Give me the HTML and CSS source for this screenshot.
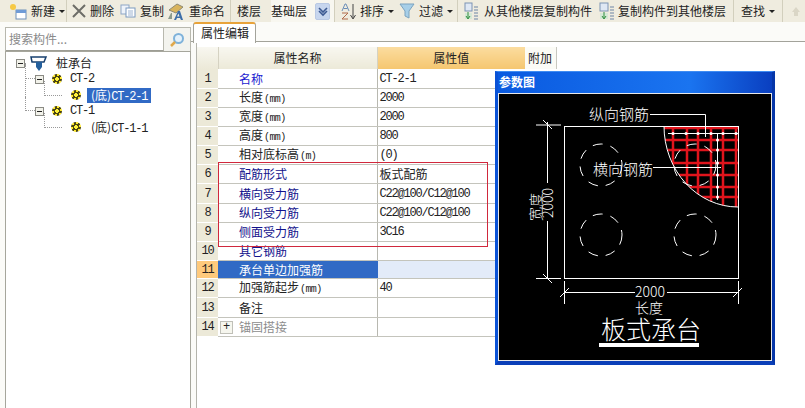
FILE: index.html
```html
<!DOCTYPE html>
<html lang="zh">
<head>
<meta charset="utf-8">
<title>属性编辑</title>
<link rel="stylesheet" href="styles.css">
</head>
<body>
<div class="app">
  <div class="toolbar">
    <div class="tb w1"><svg class="ic" width="19" height="18" viewBox="0 0 19 18"><circle cx="4" cy="5" r="3" fill="#f6c945"/><rect x="7" y="8" width="10" height="9" fill="#fff" stroke="#6f8fb8"/><rect x="7" y="8" width="10" height="3" fill="#6f9bd6"/></svg><span>新建</span><i class="caret"></i></div>
    <div class="tb sep w2"><svg class="ic" width="14" height="14" viewBox="0 0 14 14"><path d="M1 1l12 12M13 1L1 13" stroke="#6d6d68" stroke-width="2" fill="none"/></svg><span>删除</span></div>
    <div class="tb w3"><svg class="ic" width="16" height="14" viewBox="0 0 16 14"><rect x="1" y="1" width="8" height="9" fill="#eef3fa" stroke="#8ea6c6"/><rect x="6" y="4" width="9" height="9" fill="#fff" stroke="#7b99c0"/><path d="M8 7h5M8 9h5M8 11h5" stroke="#9db4d2"/></svg><span>复制</span></div>
    <div class="tb w4"><svg class="ic" width="21" height="19" viewBox="0 0 21 19"><path d="M3 8l8-6 6 3-7 6z" fill="#d9b45c" stroke="#8f8a72"/><path d="M2 17l3-6h1v6z" fill="#8c9a8c"/><path d="M8 18l4-9h2l3 9h-2l-1-2h-3l-1 2zM11 14.500h2.500l-1-3z" fill="#3d6ea8" fill-rule="evenodd"/></svg><span>重命名</span></div>
    <div class="tb sep w5"><span>楼层</span></div>
    <div class="floor"><span>基础层</span><b class="drop"><svg width="12" height="12" viewBox="0 0 12 12"><path d="M2 3l4 4 4-4M2 6l4 4 4-4" stroke="#3c5a92" stroke-width="1.6" fill="none"/></svg></b></div>
    <div class="tb sep w6"><svg class="ic" width="17" height="17" viewBox="0 0 17 17"><path d="M1 8l3-7h1l3 7M2.500 5.500h4" stroke="#6d8fb8" fill="none"/><path d="M1 10h6L1 16h6" stroke="#b06a4a" fill="none"/><path d="M12 1v14M9.500 12l2.500 4 2.500-4" stroke="#444" fill="none"/></svg><span>排序</span><i class="caret"></i></div>
    <div class="tb w7"><svg class="ic" width="16" height="16" viewBox="0 0 16 16"><path d="M1 1h14L10 8v7L6 13V8z" fill="#a7cfe8" stroke="#7ba3bf"/></svg><span>过滤</span><i class="caret"></i></div>
    <div class="tb sep w8"><svg class="ic" width="15" height="18" viewBox="0 0 15 18"><rect x="1" y="1" width="7" height="8" fill="#dfe8f4" stroke="#7d93b4"/><path d="M1 11h7v6H1z" fill="#d6e9d6"/><path d="M4 10v6M2 14l2 3 2-3" stroke="#2f8f3f" fill="none"/><path d="M10 5h4M10 8h4M10 11h4M10 14h4M10 17h4" stroke="#6d85a6"/></svg><span>从其他楼层复制构件</span></div>
    <div class="tb w9"><svg class="ic" width="16" height="18" viewBox="0 0 16 18"><rect x="1" y="1" width="8" height="8" fill="#dfe8f4" stroke="#7d93b4"/><path d="M1 11h8v6H1z" fill="#d6e9d6"/><path d="M5 10v6M3 14l2 3 2-3" stroke="#2f8f3f" fill="none"/><path d="M11 5h4M11 8h4M11 11h4M11 14h4M11 17h4" stroke="#6d85a6"/></svg><span>复制构件到其他楼层</span></div>
    <div class="tb sep w10"><span>查找</span><i class="caret"></i></div>
    <div class="tb sep w11"><svg width="10" height="11" viewBox="0 0 10 11"><path d="M5 1l4 5H7v4H3V6H1z" fill="#dad6c6"/></svg></div>
  </div>
  <div class="main">
    <aside class="side">
      <div class="search">
        <div class="search-input">搜索构件...</div>
        <div class="search-btn"><svg width="16" height="16" viewBox="0 0 16 16"><circle cx="9.500" cy="6.500" r="4.500" fill="#e4f1fb" stroke="#7fb2da" stroke-width="2"/><path d="M6 10l-4 4" stroke="#e0a94c" stroke-width="2.500"/></svg></div>
      </div>
      <div class="tree">
        <div class="node l1"><i class="exp"></i><svg class="pile" width="18" height="17" viewBox="0 0 18 17"><path d="M1 2h15l-2 5H2z" fill="#fff" stroke="#17406f" stroke-width="1.500"/><path d="M6 7h6v5l-3 4-3-4z" fill="#245f9c"/></svg><span class="label">桩承台</span></div>
        <div class="node l2 line-a"><i class="exp"></i><i class="gear"></i><span class="label lat">CT-2</span></div>
        <div class="node l3 line-b"><i class="gear"></i><span class="label sel">(底)<span class="lat">CT-2-1</span></span></div>
        <div class="node l2 line-c"><i class="exp"></i><i class="gear"></i><span class="label lat">CT-1</span></div>
        <div class="node l3 line-b"><i class="gear"></i><span class="label">(底)<span class="lat">CT-1-1</span></span></div>
      </div>
    </aside>
    <section class="content">
      <div class="tabs"><div class="tab">属性编辑</div></div>
      <div class="grid-wrap">
        <table class="grid">
          <colgroup><col class="c0"><col class="c1"><col class="c2"><col class="c3"></colgroup>
          <thead>
            <tr><th></th><th class="h">属性名称</th><th class="h hot">属性值</th><th class="extra">附加</th></tr>
          </thead>
          <tbody>
            <tr><td class="n">1</td><td class="k req1">名称</td><td class="v lat">CT-2-1</td></tr>
            <tr><td class="n">2</td><td class="k">长度<span class="u">(mm)</span></td><td class="v lat">2000</td></tr>
            <tr><td class="n">3</td><td class="k">宽度<span class="u">(mm)</span></td><td class="v lat">2000</td></tr>
            <tr><td class="n">4</td><td class="k">高度<span class="u">(mm)</span></td><td class="v lat">800</td></tr>
            <tr><td class="n">5</td><td class="k">相对底标高<span class="u">(m)</span></td><td class="v lat">(0)</td></tr>
            <tr><td class="n">6</td><td class="k req">配筋形式</td><td class="v">板式配筋</td></tr>
            <tr class="tall"><td class="n">7</td><td class="k req">横向受力筋</td><td class="v lat">C22@100/C12@100</td></tr>
            <tr><td class="n">8</td><td class="k req">纵向受力筋</td><td class="v lat">C22@100/C12@100</td></tr>
            <tr><td class="n">9</td><td class="k req">侧面受力筋</td><td class="v lat">3C16</td></tr>
            <tr><td class="n">10</td><td class="k req">其它钢筋</td><td class="v"></td></tr>
            <tr class="short selrow"><td class="n">11</td><td class="k">承台单边加强筋</td><td class="v"></td></tr>
            <tr><td class="n">12</td><td class="k">加强筋起步<span class="u">(mm)</span></td><td class="v lat">40</td></tr>
            <tr class="tall"><td class="n">13</td><td class="k">备注</td><td class="v"></td></tr>
            <tr><td class="n">14</td><td class="k muted"><div class="cell-row"><i class="plus">+</i><span>锚固搭接</span></div></td><td class="v"></td></tr>
          </tbody>
        </table>
      </div>
    </section>
  </div>
  <div class="redbox"></div>
  <div class="win">
    <div class="win-title">参数图</div>
    <svg class="draw" width="272" height="266" viewBox="499 94 272 266">
      <defs><clipPath id="arc"><path d="M664 126A74 81 0 0 0 738 207V126z"/></clipPath></defs>
      <g class="bars" clip-path="url(#arc)">
        <path d="M673 126V207M687 126V207M698 126V207M711 126V207M723 126V207M736 126V207M664 128H738M664 140H738M664 150H738M664 163H738M664 175H738M664 187H738M664 197H738"/>
      </g>
      <g class="ln">
        <rect x="564.500" y="126.500" width="174" height="152"/>
        <path d="M664 126A74 81 0 0 0 738 207"/>
        <path d="M536 125H561M547.500 122V183M547.500 221V278M536 278.500H561M543 120l9 9M543 274l9 9"/>
        <path d="M564.500 281V304M738.500 281V304M564 292.500H635M667 292.500H738M560 297l9-9M733 297l9-9"/>
        <path d="M650 114.500H705.500V137M653 167.500H721"/>
        <path d="M668 133.500H738M717.500 133V200"/>
      </g>
      <g class="dots">
        <circle cx="673" cy="133.500" r="1.500"/><circle cx="686" cy="133.500" r="1.500"/><circle cx="698" cy="133.500" r="1.500"/><circle cx="711" cy="133.500" r="1.500"/><circle cx="723" cy="133.500" r="1.500"/><circle cx="736" cy="133.500" r="1.500"/>
        <circle cx="717.500" cy="140" r="1.500"/><circle cx="717.500" cy="150" r="1.500"/><circle cx="717.500" cy="163" r="1.500"/><circle cx="717.500" cy="175" r="1.500"/><circle cx="717.500" cy="187" r="1.500"/><circle cx="717.500" cy="197" r="1.500"/>
      </g>
      <g class="dash">
        <circle cx="601" cy="165" r="21"/><circle cx="695" cy="165" r="21"/>
        <circle cx="601" cy="235" r="21"/><circle cx="695" cy="235" r="21"/>
      </g>
      <text class="t15" x="589" y="120">纵向钢筋</text>
      <text class="t15" x="593" y="175">横向钢筋</text>
      <text class="t14" transform="translate(553 218) rotate(-90)">2000</text>
      <text class="t14" transform="translate(541 221) rotate(-90)">宽度</text>
      <text class="t14" x="635" y="297">2000</text>
      <text class="t14" x="635" y="313">长度</text>
      <text class="t25" x="601" y="339">板式承台</text>
      <rect class="under" x="599" y="343" width="100" height="4"/>
    </svg>
  </div>
</div>
</body>
</html>
```
FILE: styles.css
```css
* { box-sizing: border-box; }
html, body { margin: 0; padding: 0; }
body { width: 805px; height: 408px; overflow: hidden; background: #fff; color: #222;
  font: 12px/1 "Noto Sans CJK SC", "Liberation Sans", sans-serif; }
.app { position: relative; width: 805px; height: 408px; display: flex; flex-direction: column; }
.lat, .u { font-family: "Liberation Mono", monospace; font-size: 12px; letter-spacing: -1.2px; }

/* toolbar */
.toolbar { height: 22px; flex: none; display: flex; align-items: center; background: #efecdf; white-space: nowrap; padding-left: 9px; }
.tb { display: flex; align-items: center; height: 22px; }
.tb.sep { border-left: 1px solid #d2cfbd; }
.ic { flex: none; margin-right: 3px; }
.caret { width: 0; height: 0; margin-left: 4px; border: 3px solid transparent; border-top: 3px solid #222; border-bottom: 0; }
.w1 { width: 57px; }
.w2 { width: 48px; padding-left: 5px; }
.w2 .ic { margin-right: 4px; }
.w3 { width: 51px; padding-left: 6px; }
.w3 .ic { margin-right: 4px; }
.w4 { width: 65px; padding-left: 1px; }
.w4 .ic { margin-right: 2px; }
.w5 { width: 41px; padding-left: 6px; }
.floor { width: 63px; height: 22px; display: flex; align-items: center; background: #f8f7f0; justify-content: space-between; }
.drop { width: 15px; height: 17px; margin-right: 4px; display: flex; align-items: center; justify-content: center; background: #c7d6ee; border: 1px solid #b9c9e4; border-radius: 2px; }
.w6 { width: 65px; padding-left: 6px; }
.w6 .ic { margin-right: 2px; }
.w7 { width: 58px; }
.w7 .ic { margin-right: 4px; }
.w8 { width: 142px; padding-left: 6px; }
.w8 .ic { margin-right: 5px; }
.w9 { width: 134px; }
.w10 { width: 49px; padding-left: 7px; }
.w11 { flex: 1; padding-left: 8px; }

/* main */
.main { flex: 1; display: flex; background: #fbfbf8; min-height: 0; }
.side { width: 191px; flex: none; padding: 5px 0 0 5px; display: flex; flex-direction: column; }
.search { height: 24px; display: flex; flex: none; background: #f3f3ee; border: 1px solid #b8b8ae; border-bottom: 0; }
.search-input { width: 158px; background: #fff; border-right: 1px solid #b8b8ae; color: #8a8a8a; padding: 5px 0 0 3px; border-bottom: 1px solid #9d9d94; }
.search-btn { flex: 1; display: flex; align-items: center; justify-content: center; }
.tree { flex: 1; background: #fff; border: 1px solid #a6a69c; border-bottom: 0; padding-top: 3px; }
.node { position: relative; height: 16px; display: flex; align-items: center; }
.l1 { padding-left: 10px; }
.l2 { padding-left: 29px; }
.l3 { padding-left: 65px; }
.exp { position: relative; flex: none; width: 9px; height: 9px; background: #f2f2ea; border: 1px solid #8a8a84; margin-right: 8px; z-index: 1; }
.exp::after { content: ""; position: absolute; left: 1px; right: 1px; top: 3px; height: 1px; background: #222; }
.l1 .exp { margin-right: 5px; }
.l1 .label { margin-left: 5px; }
.gear { flex: none; width: 10px; height: 10px; border-radius: 50%; background: radial-gradient(circle, #fff23a 0 1.800px, #4a4510 2px 3px, transparent 3.200px), repeating-conic-gradient(#ffe92a 0 30deg, #4a4510 30deg 60deg); }
.label { margin-left: 7px; height: 15px; line-height: 14px; padding: 0 3px; }
.l2 .label { margin-left: 5px; }
.l3 .label { margin-left: 6px; width: 64px; padding-left: 4px; white-space: nowrap; }
.sel { background: #316ac5; color: #fff; }
.line-a::before, .line-c::before { content: ""; position: absolute; left: 19px; top: -6px; width: 15px; height: 13px; border-left: 1px dotted #999; border-bottom: 1px dotted #999; }
.line-b::before { content: ""; position: absolute; left: 38px; top: -6px; width: 17px; height: 14px; border-left: 1px dotted #999; border-bottom: 1px dotted #999; }
.line-c::after { content: ""; position: absolute; left: 19px; top: -40px; height: 36px; border-left: 1px dotted #999; }

/* content */
.content { flex: 1; min-width: 0; display: flex; flex-direction: column; }
.tabs { height: 20px; flex: none; border-bottom: 1px solid #a3a39b; padding-left: 2px; position: relative; }
.tab { width: 63px; height: 21px; background: #fff; border: 1px solid #a3a39b; border-top: 2px solid #e8a33a; border-bottom: 0; border-radius: 3px 3px 0 0; padding: 3px 0 0 7px; }
.grid-wrap { flex: 1; background: #fff; margin-left: 5px; padding: 5px 0 0 0; border-left: 1px solid #b4b4ac; }
.grid { border-collapse: collapse; table-layout: fixed; width: 359px; }
.c0 { width: 21px; }
.c1 { width: 159px; }
.c2 { width: 148px; }
.c3 { width: 31px; }
th { height: 22px; font-weight: 400; padding: 0; background: linear-gradient(#f8f7f0, #ece9d8); border-right: 1px solid #d5d2c2; font-size: 12px; }
th.h { text-align: center; }
th.hot { background: linear-gradient(#fbdc9f, #f5c670); border-right: 0; }
th.extra { background: #fbfbf6; border-right: 1px solid #c8c8c0; text-align: left; padding-left: 3px; }
tbody tr { height: 19px; }
tbody tr.tall { height: 20px; }
tbody tr.short { height: 18px; }
td { padding: 1px 0 0; border-bottom: 1px solid #c4c4bc; white-space: nowrap; overflow: hidden; }
.n { background: #ece9d8; text-align: center; font-family: "Liberation Mono", monospace; font-size: 12px; letter-spacing: -1.2px; border-bottom-color: #fff; }
.k { padding-left: 21px; border-right: 1px solid #b8b8b0; }
.v { padding-left: 2px; }
.req { color: #12128c; }
.req1 { color: #1a1ad0; }
.u { font-size: 10px; letter-spacing: -0.6px; margin-left: 1px; }
.muted { color: #8d8d8d; padding-left: 2px; }
.cell-row { display: flex; align-items: center; }
.plus { flex: none; width: 13px; height: 13px; margin-right: 6px; border: 1px solid #c0c0b8; background: #f6f6ee; color: #222; font-style: normal; font-size: 12px; line-height: 10px; text-align: center; font-family: "Liberation Mono", monospace; }
.selrow .n { background: #ffca7c; }
.selrow .k { background: #316ac5; color: #fff; border-right-color: #316ac5; }
.selrow .v { background: #e3ebf9; }

/* overlays */
.redbox { position: absolute; left: 218px; top: 162px; width: 270px; height: 85px; border: 1px solid #d0283c; }
.win { position: absolute; left: 495px; top: 71px; width: 280px; height: 294px; background: #0a52d6; border-top: 1px solid #3f8cf2; border-right: 3px solid #0636a8; border-bottom: 4px solid #0a3fb8; border-left: 3px solid #0a52d6; display: flex; flex-direction: column; }
.win-title { height: 21px; flex: none; padding: 4px 0 0 1px; background: linear-gradient(90deg, #0a5ae0, #1a74f0 70%, #0a3fc0); color: #fff; font-weight: 700; font-size: 12px; }
.draw { display: block; flex: none; margin: 0; background: #000; border: 1px solid #e8e8e8; box-sizing: content-box; width: 272px; height: 266px; }
.ln { fill: none; stroke: #fff; stroke-width: 1; }
.bars { fill: none; stroke: #e0141c; stroke-width: 2.500; }
.dots { fill: #fff; }
.dash { fill: none; stroke: #fff; stroke-dasharray: 10 8; }
.draw text { fill: #fff; font-family: "Noto Sans CJK SC", sans-serif; font-weight: 300; }
.t14 { font-size: 14px; }
.t15 { font-size: 15px; }
.t25 { font-size: 25px; }
.under { fill: #fff; }
```
